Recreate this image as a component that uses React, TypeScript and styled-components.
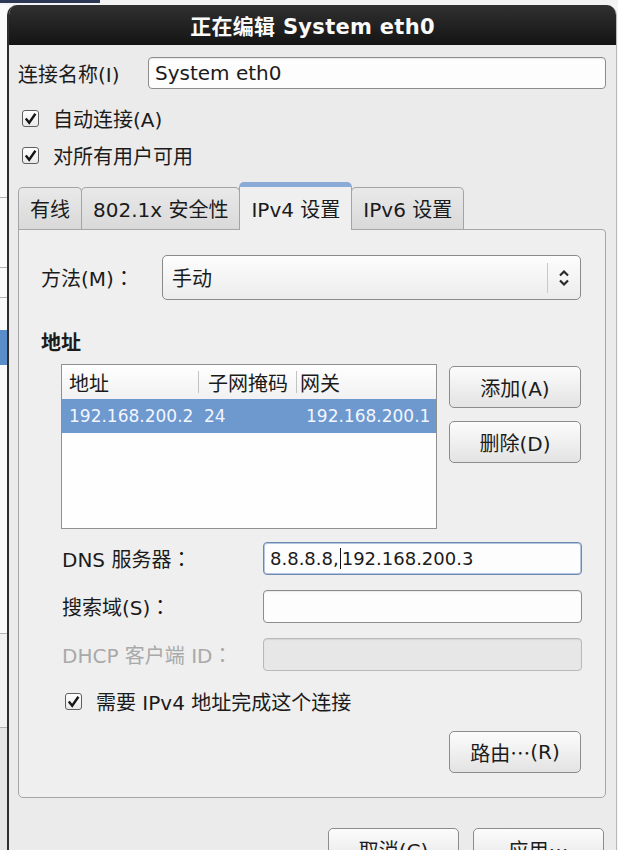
import * as React from 'react'
import styled, { createGlobalStyle } from 'styled-components'

const font = `"DejaVu Sans", "Noto Sans CJK SC", sans-serif`

const GlobalStyle = createGlobalStyle`
  * { box-sizing: border-box; }
  html, body {
    margin: 0;
    padding: 0;
    height: 850px;
    overflow: hidden;
    background: #f6f6f6;
  }
  body {
    font-family: ${font};
    font-size: 20px;
    color: #1b1b1b;
  }
`

const Page = styled.div`
  display: flex;
  flex-direction: column;
  width: 618px;
  height: 850px;
  overflow: hidden;
`

const TopGap = styled.div`
  height: 5px;
  flex-shrink: 0;
  display: flex;
  background: #f3f3f3;
`

const Navy = styled.div`
  width: 100px;
  height: 3px;
  background: #2b3754;
`

const Main = styled.div`
  display: flex;
  flex: 1;
  min-height: 0;
`

// the window behind the dialog, only a sliver shows
const Backdrop = styled.div`
  width: 7px;
  flex-shrink: 0;
  display: flex;
  flex-direction: column;
`

const Strip = styled.div<{ $h?: number; $bg?: string; $line?: boolean }>`
  height: ${p => (p.$h ? p.$h + 'px' : 'auto')};
  flex: ${p => (p.$h ? '0 0 auto' : '1')};
  background: ${p => p.$bg || '#fafafa'};
  border-bottom: ${p => (p.$line ? '1px solid #b4b4b4' : 'none')};
`

const Dialog = styled.div`
  flex: 1;
  display: flex;
  flex-direction: column;
  border-left: 2px solid #2e2e2e;
  border-right: 1px solid #bababa;
  margin-right: 1px;
  border-radius: 10px 10px 0 0;
  background: #ecebeb;
  overflow: hidden;
`

const TitleBar = styled.div`
  height: 40px;
  flex-shrink: 0;
  display: flex;
  align-items: center;
  justify-content: center;
  background: linear-gradient(#303030, #141414);
  color: #fafafa;
  font-weight: 700;
  font-size: 21px;
  letter-spacing: 0.3px;
`

const Body = styled.div`
  display: flex;
  flex-direction: column;
  padding: 12px 10px 0 9px;
`

const NameRow = styled.div`
  display: flex;
  align-items: center;
`

const Label = styled.div<{ $w?: number; $muted?: boolean }>`
  width: ${p => (p.$w ? p.$w + 'px' : 'auto')};
  flex-shrink: 0;
  white-space: nowrap;
  color: ${p => (p.$muted ? '#a9a9a9' : '#1b1b1b')};
`

// full-width punctuation drawn centred, as the GTK theme shows it
const Punct = styled.span`
  font-family: "Noto Sans CJK JP", sans-serif;
`

const Field = styled.div<{ $h?: number; $focus?: boolean; $disabled?: boolean; $digits?: boolean }>`
  flex: 1;
  height: ${p => p.$h || 33}px;
  display: flex;
  align-items: center;
  padding-left: 6px;
  border: 1px solid ${p => (p.$focus ? '#6f88ad' : p.$disabled ? '#b9b9b9' : '#8c8c8c')};
  border-radius: 4px;
  background: ${p => (p.$disabled ? '#e7e7e7' : '#fdfdfd')};
  box-shadow: ${p => (p.$focus ? 'inset 0 0 0 1px #b5c7e0' : 'inset 0 1px 1px rgba(0,0,0,0.08)')};
  font-size: ${p => (p.$digits ? '18px' : '20px')};
  white-space: nowrap;
`

const Caret = styled.span`
  display: inline-block;
  width: 1px;
  height: 21px;
  background: #111;
  margin: 0 1px;
`

const CheckRow = styled.div<{ $indent?: number; $top?: number; $h?: number }>`
  display: flex;
  align-items: center;
  gap: 14px;
  height: ${p => p.$h || 37}px;
  padding-left: ${p => p.$indent || 0}px;
  margin-top: ${p => p.$top || 0}px;
`

const Box = styled.div`
  width: 17px;
  height: 17px;
  border: 1px solid #5f5f5f;
  border-radius: 3px;
  background: linear-gradient(#ffffff, #e9e9e9);
  display: flex;
  align-items: center;
  justify-content: center;
`

const TabBar = styled.div`
  display: flex;
  align-items: flex-end;
  height: 48px;
  margin-top: 8px;
  margin-bottom: -1px;
  position: relative;
  z-index: 1;
`

const Tab = styled.div<{ $active?: boolean }>`
  height: ${p => (p.$active ? 48 : 43)}px;
  display: flex;
  align-items: center;
  padding: 0 11px;
  margin-right: -1px;
  border: 1px solid #a4a4a4;
  border-top: ${p => (p.$active ? '5px solid #8caad6' : '1px solid #a4a4a4')};
  border-bottom: ${p => (p.$active ? 'none' : '1px solid #a6a6a6')};
  border-radius: 5px 5px 0 0;
  background: ${p => (p.$active ? '#efefef' : 'linear-gradient(#e9e9e9, #d9d9d9)')};
  white-space: nowrap;
`

const Panel = styled.div`
  display: flex;
  flex-direction: column;
  border: 1px solid #a6a6a6;
  border-radius: 0 4px 5px 5px;
  background: #efefef;
  padding: 25px 24px 24px 22px;
`

const MethodRow = styled.div`
  display: flex;
  align-items: center;
`

const Select = styled.div`
  flex: 1;
  height: 45px;
  display: flex;
  align-items: center;
  border: 1px solid #8a8a8a;
  border-radius: 5px;
  background: linear-gradient(#fdfdfd, #ececec);
`

const SelectValue = styled.div`
  flex: 1;
  padding-left: 9px;
`

const SelectDivider = styled.div`
  width: 1px;
  height: 30px;
  background: #c8c8c8;
`

const SelectArrow = styled.div`
  width: 32px;
  display: flex;
  justify-content: center;
`

const SectionTitle = styled.div`
  margin-top: 31px;
  line-height: 24px;
  font-weight: 700;
`

const AddressArea = styled.div`
  display: flex;
  margin-top: 9px;
  padding-left: 20px;
`

const Table = styled.div`
  width: 377px;
  height: 165px;
  border: 1px solid #909090;
  background: #fefefe;
  display: flex;
  flex-direction: column;
`

const Row = styled.div<{ $head?: boolean }>`
  display: grid;
  grid-template-columns: 136px 98px 1fr;
  height: 34px;
  align-items: center;
  background: ${p => (p.$head ? 'linear-gradient(#ffffff, #f1f1f1)' : '#6d99cf')};
  color: ${p => (p.$head ? '#1b1b1b' : '#f3f5ff')};
  font-size: ${p => (p.$head ? '20px' : '17px')};
`

const Cell = styled.div<{ $pad: number; $sep?: boolean }>`
  height: 100%;
  display: flex;
  align-items: center;
  padding-left: ${p => p.$pad}px;
  white-space: nowrap;
  overflow: hidden;
  background: ${p =>
    p.$sep ? 'linear-gradient(#c3c3c3, #c3c3c3) left center / 1px 22px no-repeat' : 'none'};
`

const ButtonCol = styled.div`
  display: flex;
  flex-direction: column;
  gap: 13px;
  margin-left: 12px;
  padding-top: 2px;
`

const Button = styled.div<{ $w?: number }>`
  width: ${p => p.$w || 132}px;
  height: 42px;
  display: flex;
  align-items: center;
  justify-content: center;
  border: 1px solid #8c8c8c;
  border-radius: 5px;
  background: linear-gradient(#fcfcfc, #e3e3e3);
  white-space: nowrap;
`

const Fields = styled.div`
  display: grid;
  grid-template-columns: 201px 319px;
  grid-auto-rows: 33px;
  row-gap: 15px;
  align-items: center;
  margin-top: 13px;
  padding-left: 21px;
`

const ButtonRow = styled.div<{ $top: number; $gap?: number; $right?: number }>`
  display: flex;
  justify-content: flex-end;
  gap: ${p => p.$gap || 0}px;
  margin-top: ${p => p.$top}px;
  padding-right: ${p => p.$right || 0}px;
`

const Check = () => (
  <Box>
    <svg width="13" height="13" viewBox="0 0 13 13">
      <path d="M1.8 6.6 L5.2 10.8 L11.4 1.8" fill="none" stroke="#151515" strokeWidth="2.4" />
    </svg>
  </Box>
)

const UpDown = () => (
  <svg width="12" height="20" viewBox="0 0 12 20">
    <path d="M2 7.5 L6 3.5 L10 7.5 M2 12.5 L6 16.5 L10 12.5" fill="none" stroke="#2a2a2a" strokeWidth="2.2" />
  </svg>
)

const backdrop = [
  { h: 193, line: true },
  { h: 70, line: true },
  { h: 30, line: true },
  { h: 32 },
  { h: 35, bg: '#5b8dcb' },
  { h: 269, line: true },
  { h: 94, line: true, bg: '#f1f1f1' },
]

const App: React.FC = () => {
  return (
    <Page>
      <GlobalStyle />
      <TopGap>
        <Navy />
      </TopGap>
      <Main>
        <Backdrop>
          {backdrop.map((s, i) => (
            <Strip key={i} $h={s.h} $line={s.line} $bg={s.bg} />
          ))}
          <Strip $bg="#e6e6e6" />
        </Backdrop>
        <Dialog>
          <TitleBar>正在编辑 System eth0</TitleBar>
          <Body>
            <NameRow>
              <Label $w={130}>连接名称(I)</Label>
              <Field $h={32}>System eth0</Field>
            </NameRow>
            <CheckRow $indent={4} $top={11}>
              <Check />
              自动连接(A)
            </CheckRow>
            <CheckRow $indent={4}>
              <Check />
              对所有用户可用
            </CheckRow>

            <TabBar>
              <Tab>有线</Tab>
              <Tab>802.1x 安全性</Tab>
              <Tab $active>IPv4 设置</Tab>
              <Tab>IPv6 设置</Tab>
            </TabBar>

            <Panel>
              <MethodRow>
                <Label $w={121}>
                  方法(M)<Punct>：</Punct>
                </Label>
                <Select>
                  <SelectValue>手动</SelectValue>
                  <SelectDivider />
                  <SelectArrow>
                    <UpDown />
                  </SelectArrow>
                </Select>
              </MethodRow>

              <SectionTitle>地址</SectionTitle>
              <AddressArea>
                <Table>
                  <Row $head>
                    <Cell $pad={7}>地址</Cell>
                    <Cell $pad={10} $sep>子网掩码</Cell>
                    <Cell $pad={4} $sep>网关</Cell>
                  </Row>
                  <Row>
                    <Cell $pad={7}>192.168.200.2</Cell>
                    <Cell $pad={6}>24</Cell>
                    <Cell $pad={10}>192.168.200.1</Cell>
                  </Row>
                </Table>
                <ButtonCol>
                  <Button>添加(A)</Button>
                  <Button>删除(D)</Button>
                </ButtonCol>
              </AddressArea>

              <Fields>
                <Label>
                  DNS 服务器<Punct>：</Punct>
                </Label>
                <Field $focus $digits>
                  8.8.8.8,<Caret />192.168.200.3
                </Field>
                <Label>
                  搜索域(S)<Punct>：</Punct>
                </Label>
                <Field />
                <Label $muted>
                  DHCP 客户端 ID<Punct>：</Punct>
                </Label>
                <Field $disabled />
              </Fields>

              <CheckRow $indent={24} $top={18} $h={24}>
                <Check />
                需要 IPv4 地址完成这个连接
              </CheckRow>

              <ButtonRow $top={18}>
                <Button>
                  路由<Punct>…</Punct>(R)
                </Button>
              </ButtonRow>
            </Panel>

            <ButtonRow $top={30} $gap={14} $right={2}>
              <Button $w={131}>取消(C)</Button>
              <Button $w={131}>
                应用<Punct>…</Punct>
              </Button>
            </ButtonRow>
          </Body>
        </Dialog>
      </Main>
    </Page>
  )
}

export default App
